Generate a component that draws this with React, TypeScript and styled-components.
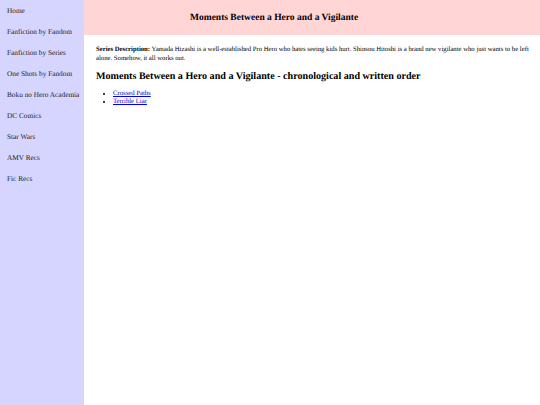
import styled, { createGlobalStyle } from "styled-components";

const GlobalStyle = createGlobalStyle`
  html, body {
    margin: 0;
    padding: 0;
    height: 100%;
  }
  body {
    font-family: "Liberation Serif", "Times New Roman", serif;
    background: #ffffff;
    text-rendering: geometricPrecision;
  }
`;

const navItems = [
  "Home",
  "Fanfiction by Fandom",
  "Fanfiction by Series",
  "One Shots by Fandom",
  "Boku no Hero Academia",
  "DC Comics",
  "Star Wars",
  "AMV Recs",
  "Fic Recs",
];

const App = () => {
  return (
    <Page>
      <GlobalStyle />
      <Sidebar>
        {navItems.map((item) => (
          <NavItem key={item}>{item}</NavItem>
        ))}
      </Sidebar>
      <Main>
        <Header>
          <Title>Moments Between a Hero and a Vigilante</Title>
        </Header>
        <Content>
          <Description>
            <b>Series Description:</b> Yamada Hizashi is a well-established Pro
            Hero who hates seeing kids hurt. Shinsou Hitoshi is a brand new
            vigilante who just wants to be left alone. Somehow, it all works
            out.
          </Description>
          <Heading>
            Moments Between a Hero and a Vigilante - chronological and written
            order
          </Heading>
          <List>
            <li>
              <a href="#">Crossed Paths</a>
            </li>
            <li>
              <a href="#">Terrible Liar</a>
            </li>
          </List>
        </Content>
      </Main>
    </Page>
  );
};
export default App;

const Page = styled.div`
  display: flex;
  width: 540px;
  height: 405px;
`;

const Sidebar = styled.nav`
  width: 84px;
  flex-shrink: 0;
  background: #d5d5ff;
  display: flex;
  flex-direction: column;
  padding-top: 6px;
  box-sizing: border-box;
`;

const NavItem = styled.div`
  height: 21px;
  padding-left: 7px;
  font-size: 7.3px;
  line-height: 9px;
  color: #222222;
  white-space: nowrap;
`;

const Main = styled.div`
  flex: 1;
  display: flex;
  flex-direction: column;
`;

const Header = styled.div`
  height: 35px;
  background: #ffd5d5;
  display: flex;
  align-items: center;
  padding-left: 106px;
`;

const Title = styled.h1`
  margin: 0;
  font-size: 9.5px;
  font-weight: bold;
  color: #000;
`;

const Content = styled.div`
  padding: 10px 6px 0 12px;
`;

const Description = styled.p`
  margin: 0;
  font-size: 6.7px;
  line-height: 9px;
  color: #000;
`;

const Heading = styled.h2`
  margin: 7px 0 0;
  font-size: 10.1px;
  line-height: 13px;
  color: #000;
`;

const List = styled.ul`
  margin: 7px 0 0;
  padding-left: 17px;
  font-size: 6.7px;
  line-height: 8px;

  a {
    color: #0000ee;
  }
`;
